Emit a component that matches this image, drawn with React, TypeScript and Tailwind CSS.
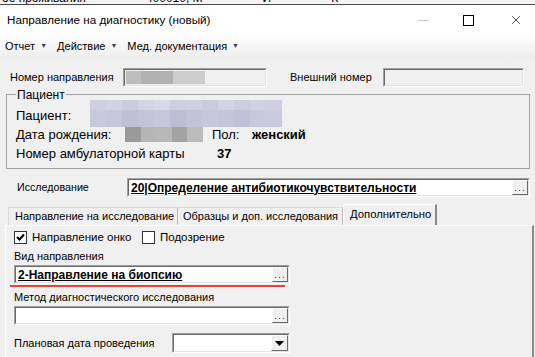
import { X } from "lucide-react";

const ms = "font-['Liberation_Sans',Arial,sans-serif]";

function Sunken({
  className = "",
  inner = "bg-white",
  children,
}: {
  className?: string;
  inner?: string;
  children?: React.ReactNode;
}) {
  return (
    <div
      className={`border-t border-l border-[#a0a0a0] border-b border-r border-b-white border-r-white ${className}`}
    >
      <div
        className={`h-full w-full border-t border-l border-[#696969] border-b border-r border-b-[#e3e3e3] border-r-[#e3e3e3] flex items-center ${inner}`}
      >
        {children}
      </div>
    </div>
  );
}

function DotsButton() {
  return (
    <div className="h-[15px] w-[16px] shrink-0 border-t border-l border-white border-b border-r border-b-[#696969] border-r-[#696969] bg-[#f0f0f0] flex items-end justify-center">
      <span className="text-[10px] leading-[10px] text-[#333] tracking-[1px] pb-[1px]">...</span>
    </div>
  );
}

function Lookup({ value, w }: { value?: string; w: string }) {
  return (
    <Sunken className={`h-[19px] ${w}`}>
      <div className="flex-1 pl-[2px] text-[12px] font-bold underline leading-none">{value}</div>
      <DotsButton />
    </Sunken>
  );
}

function Check({ checked }: { checked?: boolean }) {
  return (
    <div className="h-[13px] w-[13px] shrink-0 border border-[#333] bg-white flex items-center justify-center">
      {checked && (
        <svg width="9" height="9" viewBox="0 0 9 9">
          <path d="M1 4 L3.5 6.5 L8 1.5" stroke="#000" strokeWidth="2" fill="none" />
        </svg>
      )}
    </div>
  );
}

const nameRow1 = ["#cfcfe1", "#d2d2e3", "#ccccdf", "#d4d4e4", "#d8d8e6", "#cfcfe2", "#d0d0e3", "#cbcbdf", "#d3d3e4", "#cdcde0", "#d1d1e3", "#cfcfe1"];
const nameRow2 = ["#c9c9de", "#c6c6dc", "#bfbfd7", "#c3c3da", "#c8c8dd", "#bdbdd6", "#c2c2d9", "#c7c7dc", "#c4c4da", "#c0c0d8", "#c9c9de", "#cacade"];
const dobCols = ["#9a9a9a", "#b5b5b5", "#b8b8b8", "#a3a3a3", "#bcbcbc"];

export default function App() {
  return (
    <div className={`w-[535px] h-[357px] overflow-hidden bg-[#f0f0f0] text-black relative whitespace-nowrap ${ms}`}>
      {/* окно позади */}
      <div className="h-[5px] overflow-hidden bg-[#f4f4f4] border-b border-[#4a4a4a]">
        <div className="text-[12px] leading-[12px] -mt-[8px] pl-[2px] flex gap-[60px]">
          <span>ое проживания</span>
          <span>400010, М</span>
          <span>И</span>
          <span>К</span>
        </div>
      </div>

      {/* заголовок */}
      <div className="h-[27px] bg-white flex items-center pt-[3px]">
        <div className="text-[11.7px] pl-[7px] flex-1">Направление на диагностику (новый)</div>
        <div className="w-[11px] h-px bg-[#c8c8c8] mr-[34px]" />
        <div className="w-[11px] h-[11px] border border-black mr-[35px]" />
        <X className="w-[14px] h-[14px] mr-[12px]" strokeWidth={1.2} />
      </div>

      {/* меню */}
      <div className="h-[26px] pt-[2px] bg-gradient-to-b from-white to-[#eeeeee] flex items-center text-[11px] pl-[5px] gap-[10px]">
        {["Отчет", "Действие", "Мед. документация"].map((m) => (
          <div key={m} className="flex items-center gap-[5px]">
            <span>{m}</span>
            <span className="text-[7px] text-[#444]">▼</span>
          </div>
        ))}
      </div>

      {/* номер */}
      <div className="mt-[10px] h-[19px] flex items-center text-[11px]">
        <div className="pl-[10px] w-[123px]">Номер направления</div>
        <Sunken className="w-[144px] h-[19px]" inner="bg-[#f0f0f0]">
          <div className="flex h-[13px] ml-[1px]">
            <div className="w-[15px] bg-[#bdbdbd]" />
            <div className="w-[32px] bg-[#b2b2b2]" />
            <div className="w-[32px] bg-[#cdcdcd]" />
          </div>
        </Sunken>
        <div className="ml-[23px] w-[93px]">Внешний номер</div>
        <Sunken className="w-[141px] h-[19px]" inner="bg-[#f0f0f0]" />
      </div>

      {/* пациент */}
      <div className="relative mt-[7px] ml-[6px] w-[524px] h-[75px] border border-[#a0a0a0] text-[13px]">
        <div className="absolute -top-[7px] left-[9px] px-[1px] bg-[#f0f0f0] text-[12px] leading-[14px]">Пациент</div>
        <div className="absolute left-[83px] top-[5px] w-[192px] flex flex-col">
          <div className="flex h-[10px]">
            {nameRow1.map((c, i) => (
              <div key={i} className="w-[16px]" style={{ background: c }} />
            ))}
          </div>
          <div className="flex h-[17px]">
            {nameRow2.map((c, i) => (
              <div key={i} className="w-[16px]" style={{ background: c }} />
            ))}
          </div>
        </div>
        <div className="absolute left-[118px] top-[32px] flex h-[15px]">
          {dobCols.map((c, i) => (
            <div key={i} className="w-[15.5px]" style={{ background: c }} />
          ))}
        </div>
        <div className="pt-[11px] pl-[9px] flex flex-col">
          <div className="h-[19px] flex items-center">Пациент:</div>
          <div className="h-[19px] flex items-center">
            <span className="w-[196px]">Дата рождения:</span>
            <span className="w-[40px]">Пол:</span>
            <span className="font-bold">женский</span>
          </div>
          <div className="h-[19px] flex items-center">
            <span className="w-[201px]">Номер амбулаторной карты</span>
            <span className="font-bold">37</span>
          </div>
        </div>
      </div>

      {/* исследование */}
      <div className="mt-[9px] h-[19px] flex items-center text-[10.7px]">
        <div className="pl-[17px] w-[127px]">Исследование</div>
        <Lookup w="w-[403px]" value="20|Определение антибиотикочувствительности" />
      </div>

      {/* вкладки */}
      <div className="mt-[7px] h-[21px] flex items-end pl-[8px] text-[11px]">
        <div className="h-[18px] w-[170px] border-t border-l border-[#d9d9d9] border-r border-r-[#b9b9b9] flex items-center pl-[6px] leading-none">
          Направление на исследование
        </div>
        <div className="h-[18px] w-[165px] border-t border-[#d9d9d9] border-r border-r-[#b9b9b9] flex items-center pl-[5px] leading-none">
          Образцы и доп. исследования
        </div>
        <div className="h-[21px] w-[94px] border-t border-l border-white border-r-2 border-r-[#8a8a8a] flex items-center pl-[6px] leading-none text-[11.3px]">
          Дополнительно
        </div>
      </div>

      <div className="ml-[5px] w-[529px] h-[140px] border-t border-l border-white border-r-2 border-r-[#8a8a8a] pl-[8px] pt-[5px] text-[11px]">
        <div className="h-[13px] flex items-center text-[11.5px]">
          <Check checked />
          <span className="ml-[5px] w-[110px]">Направление онко</span>
          <Check />
          <span className="ml-[5px]">Подозрение</span>
        </div>
        <div className="mt-[5px] h-[15px] leading-[15px]">Вид направления</div>
        <div className="mt-px">
          <Lookup w="w-[276px]" value="2-Направление на биопсию" />
        </div>
        <div className="mt-px -ml-[4px] h-[2px] w-[275px] bg-[#e8413c]" />
        <div className="mt-[3px] h-[15px] leading-[15px]">Метод диагностического исследования</div>
        <div className="mt-px">
          <Lookup w="w-[276px]" />
        </div>
        <div className="mt-[8px] h-[20px] flex items-center">
          <div className="w-[158px]">Плановая дата проведения</div>
          <Sunken className="w-[118px] h-[20px]">
            <div className="flex-1" />
            <div className="h-[16px] w-[17px] border-t border-l border-white border-b border-r border-b-[#696969] border-r-[#696969] bg-[#f0f0f0] flex items-center justify-center">
              <svg width="9" height="5" viewBox="0 0 9 5">
                <path d="M0 0 H9 L4.5 5 Z" fill="#000" />
              </svg>
            </div>
          </Sunken>
        </div>
      </div>
    </div>
  );
}
